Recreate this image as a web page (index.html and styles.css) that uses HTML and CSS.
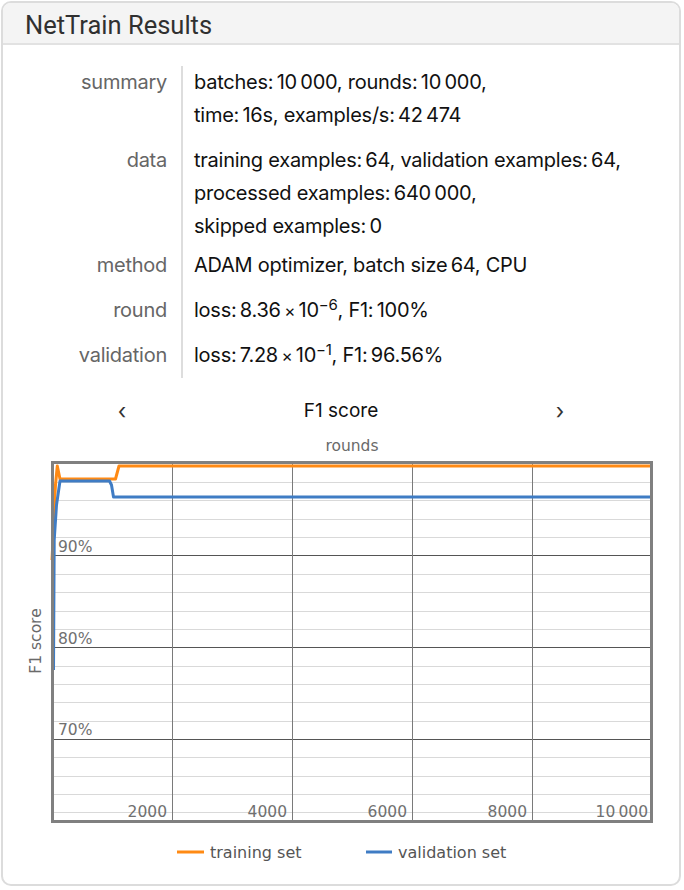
FILE: index.html
```html
<!DOCTYPE html>
<html>
<head>
<meta charset="utf-8">
<link rel="stylesheet" href="styles.css">
</head>
<body>
<div class="card">
  <div class="card-head">NetTrain Results</div>
  <div class="card-body">
    <div class="info">
      <div class="row r-summary">
        <div class="lbl">summary</div>
        <div class="val">batches:&thinsp;10&thinsp;000, rounds:&thinsp;10&thinsp;000,<br>time:&thinsp;16s, examples/s:&thinsp;42&thinsp;474</div>
      </div>
      <div class="row r-data">
        <div class="lbl">data</div>
        <div class="val">training examples:&thinsp;64, validation examples:&thinsp;64,<br>processed examples:&thinsp;640&thinsp;000,<br>skipped examples:&thinsp;0</div>
      </div>
      <div class="row r-method">
        <div class="lbl">method</div>
        <div class="val">ADAM optimizer, batch size&thinsp;64, CPU</div>
      </div>
      <div class="row r-round">
        <div class="lbl">round</div>
        <div class="val">loss:&thinsp;8.36&thinsp;<span class="times">×</span>&thinsp;10<sup>−6</sup>, F1:&thinsp;100%</div>
      </div>
      <div class="row r-valid">
        <div class="lbl">validation</div>
        <div class="val">loss:&thinsp;7.28&thinsp;<span class="times">×</span>&thinsp;10<sup>−1</sup>, F1:&thinsp;96.56%</div>
      </div>
    </div>
    <div class="chart-head">
      <span class="arrow">‹</span>
      <span class="chart-title">F1 score</span>
      <span class="arrow">›</span>
    </div>
    <svg class="chart" width="676" height="446" viewBox="3 426 676 446" xmlns="http://www.w3.org/2000/svg">
      <g stroke="#d9d9d9" stroke-width="1">
        <line x1="54" x2="650" y1="482.5" y2="482.5"/>
        <line x1="54" x2="650" y1="500.5" y2="500.5"/>
        <line x1="54" x2="650" y1="519.5" y2="519.5"/>
        <line x1="54" x2="650" y1="537.5" y2="537.5"/>
        <line x1="54" x2="650" y1="574.5" y2="574.5"/>
        <line x1="54" x2="650" y1="592.5" y2="592.5"/>
        <line x1="54" x2="650" y1="611.5" y2="611.5"/>
        <line x1="54" x2="650" y1="629.5" y2="629.5"/>
        <line x1="54" x2="650" y1="666.5" y2="666.5"/>
        <line x1="54" x2="650" y1="684.5" y2="684.5"/>
        <line x1="54" x2="650" y1="702.5" y2="702.5"/>
        <line x1="54" x2="650" y1="721.5" y2="721.5"/>
        <line x1="54" x2="650" y1="757.5" y2="757.5"/>
        <line x1="54" x2="650" y1="776.5" y2="776.5"/>
        <line x1="54" x2="650" y1="794.5" y2="794.5"/>
        <line x1="54" x2="650" y1="812.5" y2="812.5"/>
      </g>
      <g stroke="#555" stroke-width="1">
        <line x1="54" x2="650" y1="555.5" y2="555.5"/>
        <line x1="54" x2="650" y1="647.5" y2="647.5"/>
        <line x1="54" x2="650" y1="739.5" y2="739.5"/>
      </g>
      <g stroke="#7a7a7a" stroke-width="1">
        <line x1="172.5" x2="172.5" y1="464" y2="820"/>
        <line x1="292.5" x2="292.5" y1="464" y2="820"/>
        <line x1="412.5" x2="412.5" y1="464" y2="820"/>
        <line x1="532.5" x2="532.5" y1="464" y2="820"/>
      </g>
      <g class="tick">
        <text x="58" y="552">90%</text>
        <text x="58" y="644">80%</text>
        <text x="58" y="735">70%</text>
        <text x="167" y="817" text-anchor="end">2000</text>
        <text x="287" y="817" text-anchor="end">4000</text>
        <text x="407" y="817" text-anchor="end">6000</text>
        <text x="527" y="817" text-anchor="end">8000</text>
        <text x="648" y="817" text-anchor="end">10&#8201;000</text>
      </g>
      <polyline fill="none" stroke="#ff8a14" stroke-width="3" stroke-linejoin="round" points="52,560 53,540 54,510 55.5,485 57.3,466 60,479 115.5,479 119,466 650,466"/>
      <polyline fill="none" stroke="#3f7cc4" stroke-width="3" stroke-linejoin="round" points="53.5,670 54.2,540 56.5,505 60,481 109.5,481 111.5,485 113.5,497 650,497"/>
      <rect x="52.5" y="462.5" width="599" height="359" fill="none" stroke="#808080" stroke-width="3"/>
      <text class="axis" x="352" y="451" text-anchor="middle">rounds</text>
      <text class="axis" transform="translate(40.5,641) rotate(-90)" text-anchor="middle">F1 score</text>
      <line x1="177" x2="204" y1="852" y2="852" stroke="#ff8a14" stroke-width="3"/>
      <text class="legend" x="210" y="857.5">training set</text>
      <line x1="366" x2="392" y1="852" y2="852" stroke="#3f7cc4" stroke-width="3"/>
      <text class="legend" x="398" y="857.5">validation set</text>
    </svg>
  </div>
</div>
</body>
</html>
```

FILE: styles.css
```css
html, body {
  margin: 0;
  padding: 0;
  background: #ffffff;
}

.card {
  box-sizing: border-box;
  width: 680px;
  margin: 1px 0 0 1px;
  border: 2px solid #dcdcdc;
  border-radius: 10px;
  overflow: hidden;
  background: #ffffff;
}

.card-head {
  height: 40px;
  line-height: 44px;
  padding-left: 22px;
  background: #f4f4f4;
  border-bottom: 2px solid #e2e2e2;
  font-family: Roboto, "Liberation Sans", sans-serif;
  font-size: 25.5px;
  color: #303030;
}

.card-body {
  padding: 21px 0 12px 0;
}

.info {
  font-family: Inter, Roboto, "Liberation Sans", sans-serif;
  font-size: 20px;
  line-height: 33px;
  letter-spacing: -0.25px;
}

.row {
  display: grid;
  grid-template-columns: 178px 1fr;
}

.lbl {
  text-align: right;
  padding-right: 14px;
  color: #666666;
}

.val {
  border-left: 2px solid #dddddd;
  padding-left: 11px;
  color: #111111;
}

.r-summary .val { padding-bottom: 12px; }
.r-data .val { padding-bottom: 6px; }
.r-method .val { padding-bottom: 12px; }
.r-round .val { padding-bottom: 11px; }
.r-valid .val { padding-bottom: 5px; }

.times {
  font-size: 17px;
}

sup {
  font-size: 15px;
  line-height: 0;
  vertical-align: 0.5em;
}

.chart-head {
  margin-top: 18px;
  height: 30px;
  line-height: 30px;
  display: flex;
  justify-content: space-between;
  align-items: center;
  padding: 0 114px 0 114px;
  font-family: Inter, Roboto, "Liberation Sans", sans-serif;
  color: #111111;
}

.arrow {
  font-size: 22px;
  width: 10px;
  text-align: center;
  color: #333333;
}

.chart-title {
  font-size: 19px;
}

.chart {
  display: block;
}

.tick {
  font-family: "DejaVu Sans", Verdana, sans-serif;
  font-size: 15.5px;
  fill: #707070;
}

.axis {
  font-family: "DejaVu Sans", Verdana, sans-serif;
  font-size: 15.5px;
  fill: #6a6a6a;
}

.legend {
  font-family: "DejaVu Sans", Verdana, sans-serif;
  font-size: 16px;
  fill: #555555;
}
```
